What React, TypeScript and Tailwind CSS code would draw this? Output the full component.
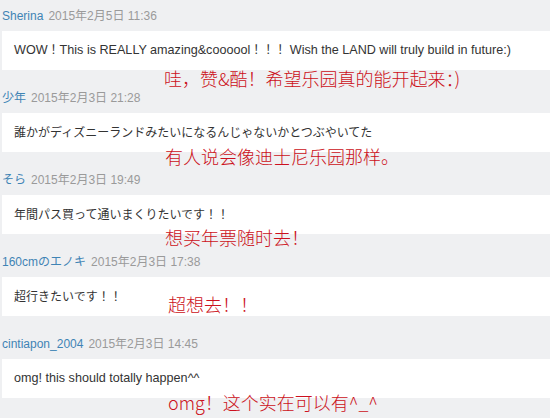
import React from 'react';

type Comment = {
  name: string;
  date: string;
  body: string;
  note: string;
  noteTop: string;
  noteLeft: string;
};

const comments: Comment[] = [
  {
    name: 'Sherina',
    date: '2015年2月5日 11:36',
    body: 'WOW！This is REALLY amazing&coooool！！！ Wish the LAND will truly build in future:)',
    note: '哇，赞&酷！希望乐园真的能开起来：)',
    noteTop: 'top-[69px]',
    noteLeft: 'left-[162px]',
  },
  {
    name: '少年',
    date: '2015年2月3日 21:28',
    body: '誰かがディズニーランドみたいになるんじゃないかとつぶやいてた',
    note: '有人说会像迪士尼乐园那样。',
    noteTop: 'top-[65px]',
    noteLeft: 'left-[163px]',
  },
  {
    name: 'そら',
    date: '2015年2月3日 19:49',
    body: '年間パス買って通いまくりたいです！！',
    note: '想买年票随时去！',
    noteTop: 'top-[64px]',
    noteLeft: 'left-[163px]',
  },
  {
    name: '160cmのエノキ',
    date: '2015年2月3日 17:38',
    body: '超行きたいです！！',
    note: '超想去！！',
    noteTop: 'top-[49px]',
    noteLeft: 'left-[166px]',
  },
  {
    name: 'cintiapon_2004',
    date: '2015年2月3日 14:45',
    body: 'omg! this should totally happen^^',
    note: 'omg！这个实在可以有^_^',
    noteTop: 'top-[65px]',
    noteLeft: 'left-[166px]',
  },
];

const sans = "font-['Helvetica_Neue','Liberation_Sans','Noto_Sans_CJK_JP',sans-serif]";

// latin runs render a touch larger than the kana/kanji ones
function Body({ text }: { text: string }) {
  const parts = text.split(/([\x00-\x7F]+)/).filter(Boolean);
  return (
    <>
      {parts.map((p, i) =>
        /^[\x00-\x7F]+$/.test(p) ? (
          <span key={i} className="text-[12.6px]">
            {p}
          </span>
        ) : (
          <span key={i}>{p}</span>
        )
      )}
    </>
  );
}

export default function App() {
  return (
    <div className={`w-[550px] h-[418px] overflow-hidden bg-[#eff0f2] pl-[2px] ${sans}`}>
      {comments.map((c) => (
        <div key={c.name} className="relative h-[82px] pt-2">
          {/* header */}
          <div className="h-4 flex items-center gap-[5px] text-[12px] leading-none">
            <span className="text-[#3f84b5]">{c.name}</span>
            <span className="text-[#9a9a9a]">{c.date}</span>
          </div>

          {/* body */}
          <div className="mt-[7px] h-[39px] bg-white flex items-center pl-3 text-[12px] text-[#333] whitespace-nowrap">
            <div>
              <Body text={c.body} />
            </div>
          </div>

          {/* translation note */}
          <div
            className={`absolute ${c.noteTop} ${c.noteLeft} text-[18px] font-light leading-none text-[#cc1020] whitespace-nowrap font-['Noto_Sans_CJK_SC',sans-serif]`}
          >
            {c.note}
          </div>
        </div>
      ))}
    </div>
  );
}
